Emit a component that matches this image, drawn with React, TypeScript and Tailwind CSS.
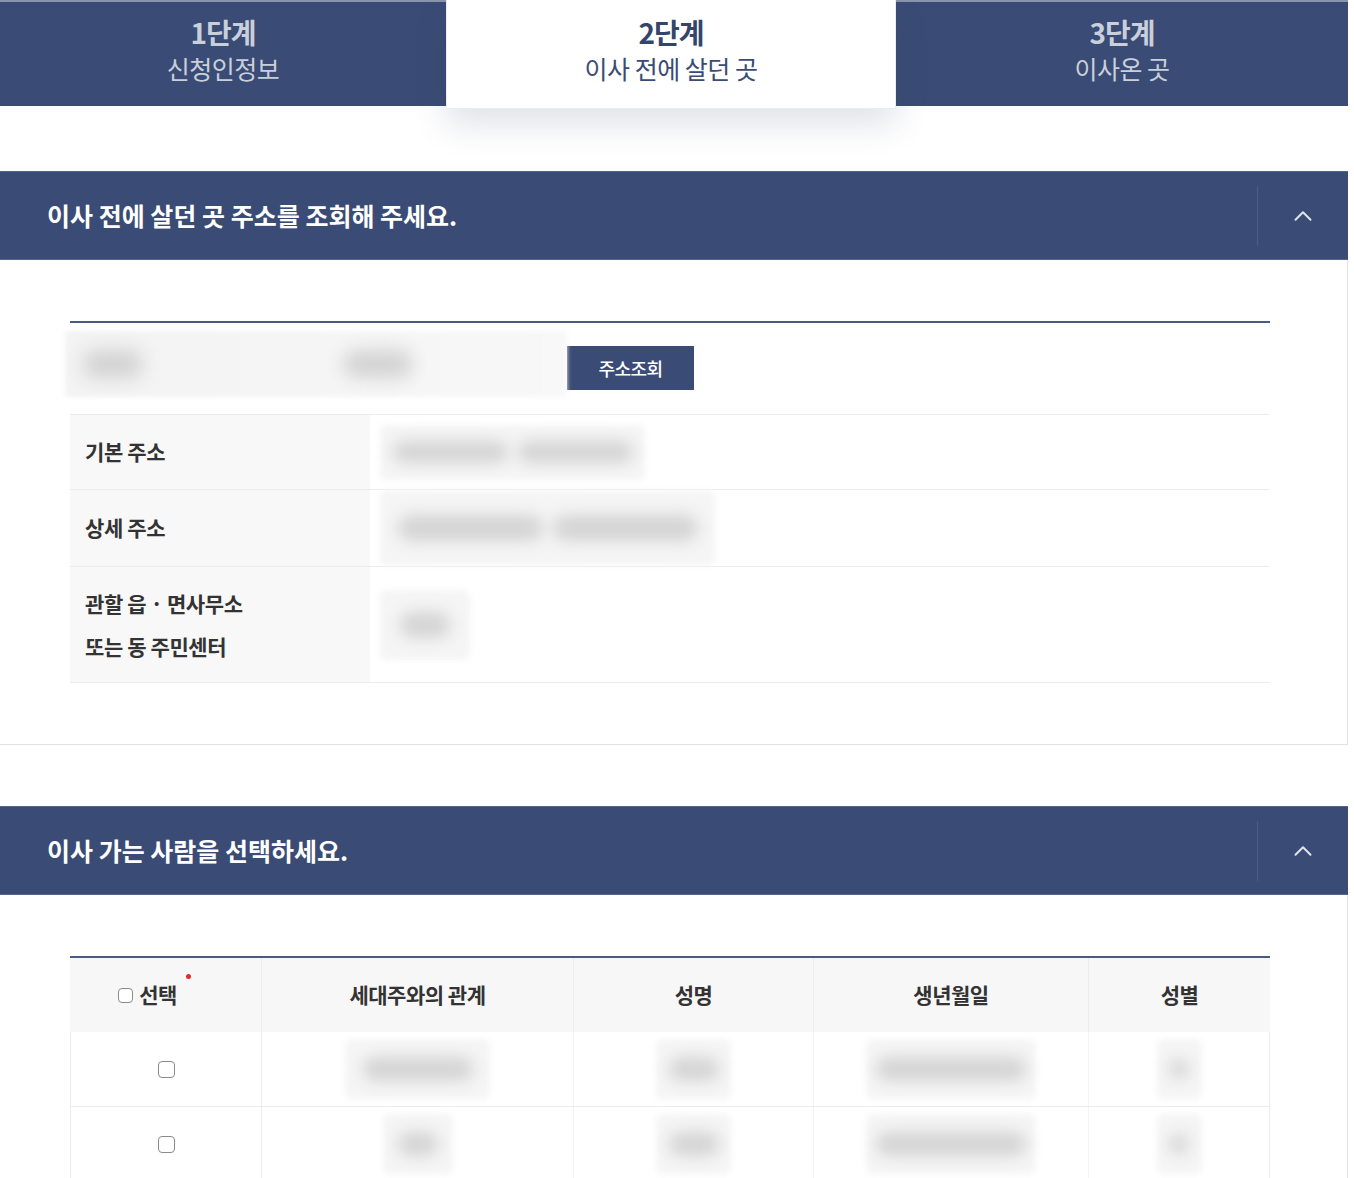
import React from "react";
import { ChevronUp } from "lucide-react";

const NAVY = "bg-[#3a4c75]";

function Blob({ w, h, innerW, innerH, spots }: { w: number; h: number; innerW: number; innerH: number; spots?: number }) {
  return (
    <div
      className="flex items-center justify-center rounded-[6px] bg-[#f5f5f5] blur-[3px]"
      style={{ width: w, height: h }}
    >
      <div className="flex items-center gap-[10px] blur-[7px]">
        {Array.from({ length: spots ?? 1 }).map((_, i) => (
          <div
            key={i}
            className="rounded-full bg-[#d4d4d4]"
            style={{ width: innerW / (spots ?? 1), height: innerH }}
          />
        ))}
      </div>
    </div>
  );
}

function SectionHeader({ title }: { title: string }) {
  return (
    <div className={`flex h-[89px] items-center justify-between border-y border-[#56668a] ${NAVY}`}>
      <h2 className="pl-[47px] text-[25px] font-bold tracking-[0px] text-white">{title}</h2>
      <div className="flex h-full w-[91px] items-center">
        <div className="h-[60px] border-l border-[#4b5c82]" />
        <div className="flex flex-1 items-center justify-center">
          <ChevronUp className="h-[30px] w-[30px] text-[#dfe3ea]" strokeWidth={1.6} />
        </div>
      </div>
    </div>
  );
}

function Check({ size = 15 }: { size?: number }) {
  return (
    <span
      className="inline-block rounded-[4px] border border-[#8a8a8a] bg-white"
      style={{ width: size, height: size }}
    />
  );
}

export default function App() {
  return (
    <div className="h-[1178px] w-[1354px] overflow-hidden bg-white font-['Noto_Sans_CJK_KR','Noto_Sans',sans-serif] text-[#333]">
      <div className="w-[1348px]">
        {/* Tabs */}
        <div className="flex h-[106px] items-start">
          <div className={`flex h-[106px] w-[446px] flex-col items-center border-t-2 border-[#8a95ad] pt-[12px] ${NAVY}`}>
            <div className="text-[28px] font-bold leading-[36px] tracking-[-1px] text-[#c9cfdb]">1단계</div>
            <div className="text-[25px] leading-[36px] tracking-[-0.5px] text-[#c9cfdb]">신청인정보</div>
          </div>
          <div className="relative z-10 flex h-[109px] w-[450px] flex-col items-center border-x border-b border-[#ececec] bg-white pt-[14px] shadow-[0_16px_32px_rgba(40,55,90,0.14)]">
            <div className="text-[28px] font-bold leading-[36px] tracking-[-1px] text-[#34456b]">2단계</div>
            <div className="text-[25px] leading-[36px] tracking-[-0.5px] text-[#3a4c75]">이사 전에 살던 곳</div>
          </div>
          <div className={`flex h-[106px] w-[452px] flex-col items-center border-t-2 border-[#8a95ad] pt-[12px] ${NAVY}`}>
            <div className="text-[28px] font-bold leading-[36px] tracking-[-1px] text-[#c9cfdb]">3단계</div>
            <div className="text-[25px] leading-[36px] tracking-[-0.5px] text-[#c9cfdb]">이사온 곳</div>
          </div>
        </div>

        {/* Section 1 */}
        <div className="mt-[65px]">
          <SectionHeader title="이사 전에 살던 곳 주소를 조회해 주세요." />
          <div className="border-b border-r border-[#e2e2e2] pb-[61px] pl-[70px] pt-[61px]">
            <div className="w-[1200px]">
              <div className="h-[2px] bg-[#4a5a80]" />
              <div className="mt-[8px] flex h-[66px] items-center">
                <div className="-ml-[5px] flex h-[66px] w-[502px] items-center bg-gradient-to-r from-[#f3f3f3] to-[#f8f8f8] pl-[10px] blur-[2px]">
                  <div className="flex w-full items-center">
                    <div className="ml-[8px] h-[28px] w-[60px] rounded-full bg-[#d2d2d2] blur-[9px]" />
                    <div className="ml-[200px] h-[28px] w-[70px] rounded-full bg-[#d2d2d2] blur-[9px]" />
                  </div>
                </div>
                <button className={`mt-[8px] h-[44px] w-[127px] text-[18px] font-medium tracking-[-0.5px] text-white ${NAVY}`}>
                  주소조회
                </button>
              </div>

              <div className="mt-[17px] border-b border-t border-[#ececec] text-[21px] font-bold tracking-[-0.4px]">
                <div className="flex h-[75px] border-b border-[#ececec]">
                  <div className="flex w-[300px] items-center bg-[#f8f8f8] pl-[15px]">기본 주소</div>
                  <div className="flex items-center pl-[10px]">
                    <Blob w={265} h={55} innerW={230} innerH={22} spots={2} />
                  </div>
                </div>
                <div className="flex h-[77px] border-b border-[#ececec]">
                  <div className="flex w-[300px] items-center bg-[#f8f8f8] pl-[15px]">상세 주소</div>
                  <div className="flex items-center pl-[10px]">
                    <Blob w={335} h={74} innerW={290} innerH={26} spots={2} />
                  </div>
                </div>
                <div className="flex h-[115px]">
                  <div className="flex w-[300px] flex-col justify-center bg-[#f8f8f8] pl-[15px] leading-[43px]">
                    <span>관할 읍 · 면사무소</span>
                    <span>또는 동 주민센터</span>
                  </div>
                  <div className="flex items-center pl-[10px]">
                    <Blob w={90} h={70} innerW={50} innerH={26} />
                  </div>
                </div>
              </div>
            </div>
          </div>
        </div>

        {/* Section 2 */}
        <div className="mt-[61px]">
          <SectionHeader title="이사 가는 사람을 선택하세요." />
          <div className="border-r border-[#e2e2e2] pb-[40px] pl-[70px] pt-[61px]">
            <div className="w-[1200px]">
              <div className="h-[2px] bg-[#4a5a80]" />
              <div className="flex h-[74px] bg-[#f7f7f7] text-[21px] font-bold tracking-[-0.5px]">
                <div className="flex w-[192px] items-center justify-center border-r border-[#ececec] pr-[36px]">
                  <div className="relative flex items-center gap-[6px]">
                    <Check size={15} />
                    <span>선택</span>
                    <span className="absolute -right-[14px] -top-[5px] h-[5px] w-[5px] rounded-full bg-[#e32b2b]" />
                  </div>
                </div>
                <div className="flex w-[312px] items-center justify-center border-r border-[#ececec]">세대주와의 관계</div>
                <div className="flex w-[240px] items-center justify-center border-r border-[#ececec]">성명</div>
                <div className="flex w-[275px] items-center justify-center border-r border-[#ececec]">생년월일</div>
                <div className="flex w-[181px] items-center justify-center">성별</div>
              </div>
              {[0, 1].map((r) => (
                <div key={r} className="flex h-[75px] border-x border-b border-[#ececec]">
                  <div className="flex w-[191px] items-center justify-center border-r border-[#ececec]">
                    <Check size={17} />
                  </div>
                  <div className="flex w-[312px] items-center justify-center border-r border-[#f4f4f4]">
                    <Blob w={r === 0 ? 145 : 70} h={60} innerW={r === 0 ? 110 : 40} innerH={24} />
                  </div>
                  <div className="flex w-[240px] items-center justify-center border-r border-[#f4f4f4]">
                    <Blob w={75} h={60} innerW={50} innerH={24} />
                  </div>
                  <div className="flex w-[275px] items-center justify-center border-r border-[#f4f4f4]">
                    <Blob w={170} h={60} innerW={150} innerH={24} />
                  </div>
                  <div className="flex w-[180px] items-center justify-center">
                    <Blob w={45} h={60} innerW={20} innerH={20} />
                  </div>
                </div>
              ))}
            </div>
          </div>
        </div>
      </div>
    </div>
  );
}
